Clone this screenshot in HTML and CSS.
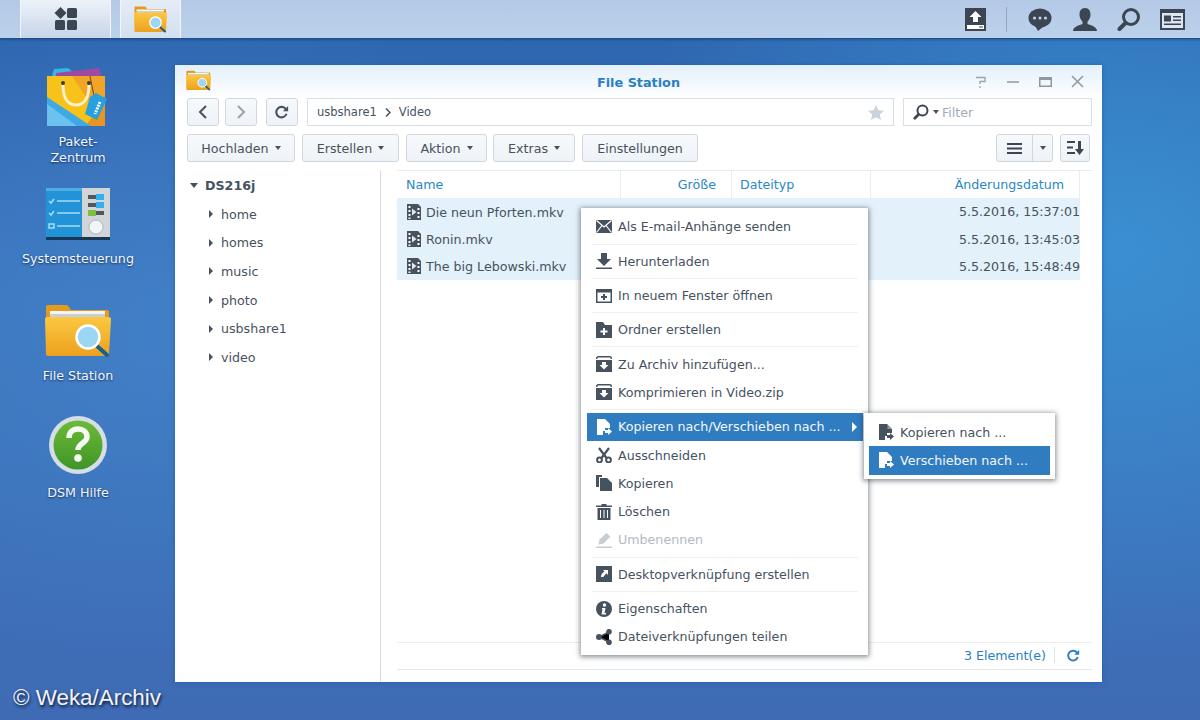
FILE: index.html
```html
<!DOCTYPE html>
<html lang="de">
<head>
<meta charset="utf-8">
<title>File Station</title>
<link rel="stylesheet" href="styles.css">
</head>
<body>
<svg class="defs" width="0" height="0" aria-hidden="true">
  <defs>
    <linearGradient id="fold" x1="0" y1="0" x2="0" y2="1"><stop offset="0" stop-color="#fbc83f"/><stop offset="1" stop-color="#eda01f"/></linearGradient>
    <linearGradient id="green" x1="0" y1="0" x2="0" y2="1"><stop offset="0" stop-color="#6cba38"/><stop offset="1" stop-color="#3f9527"/></linearGradient>
    <symbol id="film" viewBox="0 0 16 18"><path fill="#47525f" d="M1 1h11l3 3v13H1z"/><path fill="#fff" d="M2.500 3h2v2h-2zM2.500 7h2v2h-2zM2.500 11h2v2h-2zM2.500 14.500h2v1.500h-2zM11.500 5h2v2h-2zM11.500 9h2v2h-2zM11.500 13h2v2h-2z"/><path fill="#dfe7ef" d="M6 5.500l4.500 3.500-4.500 3.500z"/></symbol>
    <symbol id="move" viewBox="0 0 16 16"><path fill="currentColor" d="M1 0h8l5 5v4H9v3H7v4H1z"/><path fill="currentColor" d="M9 11h3V9l4 3.500-4 3.500v-2H9z"/><path fill="#fff" opacity=".4" d="M9.500 1v4h4z"/></symbol>
    <symbol id="archive" viewBox="0 0 16 16"><path fill="#47525f" d="M0 4h16v12H0z"/><path fill="none" stroke="#47525f" stroke-width="1.400" d="M.8 3V2a1.200 1.200 0 0 1 1.200-1.200h12A1.200 1.200 0 0 1 15.200 2v1"/><path fill="#fff" d="M6 6h4v3h2.500L8 13.500 3.500 9H6z"/></symbol>
    <symbol id="reload" viewBox="0 0 16 16"><path fill="none" stroke="currentColor" stroke-width="2.400" d="M13.200 10a6 6 0 1 1-.6-5"/><path fill="currentColor" d="M15 1v6H9z"/></symbol>
    <symbol id="folder" viewBox="0 0 66 54"><path fill="#e49b1c" d="M1 3q0-2 2-2h18q2 0 3 2l2 3h36q2 0 2 2v6H1z"/><path fill="#f4f6f8" d="M5 7h55v3H5z"/><path fill="#c9cfd5" d="M5 10h55v4H5z"/><path fill="url(#fold)" d="M0 15q0-2 2-2h61q3 0 3 2l-2 35q0 2-2 2H3q-2 0-2-2z"/><path stroke="#16608e" stroke-width="4" stroke-linecap="round" d="M52 42l10 9"/><circle cx="43" cy="33" r="11.500" fill="#9cd6f5" stroke="#fff" stroke-width="2.500"/></symbol>
  </defs>
</svg>

<header class="taskbar">
  <div class="task-left">
    <button class="task-btn start" aria-label="Hauptmenü">
      <svg width="24" height="24" viewBox="0 0 24 24"><path fill="#3c4652" d="M6.500 0l6 6-6 6-6-6z"/><rect x="13" y="1" width="10" height="10" rx="1.500" fill="#3c4652"/><rect x="1" y="13" width="10" height="10" rx="1.500" fill="#3c4652"/><rect x="13" y="13" width="10" height="10" rx="1.500" fill="#3c4652"/></svg>
    </button>
    <button class="task-btn app" aria-label="File Station"><svg width="33" height="27"><use href="#folder"/></svg></button>
  </div>
  <div class="task-right">
    <svg class="upload" width="21" height="23" viewBox="0 0 21 23"><path fill="#3c4652" d="M0 0h21v23H0z"/><path fill="#fff" d="M10.500 3l6 6h-3.500v5h-5V9H4.500z"/><path fill="#fff" d="M2 17h17v4H2z"/><path fill="#3c4652" d="M14 18.500h4v1h-4z"/></svg>
    <span class="task-sep"></span>
    <svg class="chat" width="24" height="23" viewBox="0 0 24 23"><ellipse cx="12" cy="10" rx="11.500" ry="9.500" fill="#3c4652"/><path fill="#3c4652" d="M6 16l4 7 6-5z"/><circle cx="6.500" cy="10" r="1.500" fill="#c5d6ea"/><circle cx="12" cy="10" r="1.500" fill="#c5d6ea"/><circle cx="17.500" cy="10" r="1.500" fill="#c5d6ea"/></svg>
    <svg width="24" height="23" viewBox="0 0 24 23"><path fill="#3c4652" d="M12 0c4 0 5.500 3 5.500 6.500 0 3-1.300 5.500-3 7v2.500c3 1.300 9.500 2.500 9.500 7H0c0-4.500 6.500-5.700 9.500-7v-2.500c-1.700-1.500-3-4-3-7C6.500 3 8 0 12 0z"/></svg>
    <svg width="24" height="23" viewBox="0 0 24 23"><circle cx="14" cy="9" r="7.500" fill="none" stroke="#3c4652" stroke-width="3"/><path stroke="#3c4652" stroke-width="4" stroke-linecap="round" d="M8.500 15L2.500 21"/></svg>
    <svg width="25" height="21" viewBox="0 0 25 21"><path fill="#3c4652" d="M0 0h25v21H0z"/><path fill="#dce6f2" d="M2 4h21v15H2z"/><path fill="#3c4652" d="M4 6.500h7v6H4zM13 7h8v1.500h-8zM13 10.500h8V12h-8zM4 14.500h17V16H4z"/></svg>
  </div>
</header>

<main class="desktop">
  <nav class="shortcuts">
    <a class="shortcut s-paket">
      <svg width="64" height="62" viewBox="0 0 64 62"><path fill="#37b6e8" d="M8 3l14-1 10 8H6z"/><path fill="#9d4aa0" d="M10 7l43-5 3 9H10z"/><path fill="#f7c31b" d="M1 10h58v50H1z"/><path fill="#f1a526" d="M26 10h33v50z"/><path fill="#e9951f" d="M59 30v30H40z"/><path fill="#3fa9e6" d="M1 31l44 29H1z"/><path fill="#6cc2ef" d="M1 38l30 22H1z"/><path fill="none" stroke="#fbf0d0" stroke-width="3" d="M17 19c0 13 5 20 13 20s13-7 13-20"/><circle cx="17" cy="17" r="2" fill="#3c3c3c"/><circle cx="43" cy="17" r="2" fill="#3c3c3c"/><path fill="none" stroke="#6b4a20" stroke-width="1" d="M44 10l4 20"/><path fill="#27a0df" d="M50 27l11 6-10 21-12-6 5-17z"/><path stroke="#fff" stroke-width="3" stroke-dasharray="2 1" d="M54 36l-5 12"/></svg>
      <span>Paket-<br>Zentrum</span>
    </a>
    <a class="shortcut s-sys">
      <svg width="64" height="52" viewBox="0 0 64 52"><path fill="#2293d6" d="M0 0h37v50H0z"/><path fill="#4eaee4" d="M0 0h37v3H0z"/><path fill="#d1d5d8" d="M36 0h28v50H36z"/><path fill="#1c3754" d="M0 49h64v3H0z"/><path stroke="#a8dcf7" stroke-width="1.500" d="M11 13h23M11 25h23M11 38h23"/><path fill="none" stroke="#a8dcf7" stroke-width="1.500" d="M3 13l2 2 3-4M3 25l2 2 3-4M3 36h5v4H3z"/><path fill="#50585f" d="M42 7h16v4H42zM42 15h16v4H42zM42 23h16v4H42z"/><path fill="#30b0ee" d="M50 6h8v6h-8zM50 14h8v6h-8z"/><path fill="#78c142" d="M42 22h8v6h-8z"/><circle cx="50" cy="39" r="7" fill="#f2f5f7" stroke="#aeb5ba"/></svg>
      <span>Systemsteuerung</span>
    </a>
    <a class="shortcut s-file">
      <svg width="66" height="54"><use href="#folder"/></svg>
      <span>File Station</span>
    </a>
    <a class="shortcut s-help">
      <svg width="60" height="60" viewBox="0 0 60 60"><circle cx="30" cy="30" r="29" fill="#d5dde6"/><circle cx="30" cy="30" r="24.500" fill="url(#green)"/><path fill="none" stroke="#f6fbf2" stroke-width="5.500" d="M21 23c0-6 4-9 9-9s9 3 9 8c0 6-9 6-9 13"/><circle cx="30" cy="43" r="3.800" fill="#f6fbf2"/></svg>
      <span>DSM Hilfe</span>
    </a>
  </nav>

  <section class="window">
    <div class="titlebar">
      <svg class="title-icon" width="25" height="21"><use href="#folder" /></svg>
      <h1>File Station</h1>
      <div class="win-controls">
        <svg width="12" height="12" viewBox="0 0 12 12"><path fill="none" stroke="#9aa4ad" stroke-width="1.300" d="M1 1.500h9v4H5v2.500M5 10v2"/></svg>
        <svg width="14" height="12" viewBox="0 0 14 12"><path stroke="#8e98a2" stroke-width="1.500" d="M1 6h12"/></svg>
        <svg width="13" height="12" viewBox="0 0 13 12"><path fill="#8e98a2" d="M0 1h13v10H0z"/><path fill="#f3f7fa" d="M1.500 4h10v5.500h-10z"/></svg>
        <svg width="13" height="13" viewBox="0 0 13 13"><path stroke="#8e98a2" stroke-width="1.500" d="M1 1l11 11M12 1L1 12"/></svg>
      </div>
    </div>

    <div class="nav-row">
      <button class="btn square" aria-label="Zurück"><svg width="10" height="14" viewBox="0 0 10 14"><path fill="none" stroke="#47525f" stroke-width="2" d="M8 1L2 7l6 6"/></svg></button>
      <button class="btn square" aria-label="Vor"><svg width="10" height="14" viewBox="0 0 10 14"><path fill="none" stroke="#9aa3ac" stroke-width="2" d="M2 1l6 6-6 6"/></svg></button>
      <button class="btn square reload" aria-label="Neu laden"><svg class="ico-dark" width="14" height="14"><use href="#reload"/></svg></button>
      <div class="path">
        <span>usbshare1</span>
        <svg width="6" height="9" viewBox="0 0 6 9"><path fill="none" stroke="#47525f" stroke-width="1.500" d="M1 .5l4 4-4 4"/></svg>
        <span>Video</span>
        <svg class="star" width="16" height="15" viewBox="0 0 16 15"><path fill="#ccd3da" d="M8 0l2.400 5.200 5.600.6-4.200 3.800 1.200 5.400L8 12.300 3 15l1.200-5.400L0 5.800l5.600-.6z"/></svg>
      </div>
      <div class="filter">
        <svg width="16" height="16" viewBox="0 0 16 16"><circle cx="9.500" cy="6.500" r="5" fill="none" stroke="#3c4652" stroke-width="2"/><path stroke="#3c4652" stroke-width="2.800" stroke-linecap="round" d="M5.500 10.500L1.800 14.200"/></svg>
        <i class="caret"></i>
        <span>Filter</span>
      </div>
    </div>

    <div class="tool-row">
      <button class="btn tb w-hoch">Hochladen<i class="caret"></i></button>
      <button class="btn tb w-erst">Erstellen<i class="caret"></i></button>
      <button class="btn tb w-akt">Aktion<i class="caret"></i></button>
      <button class="btn tb w-ext">Extras<i class="caret"></i></button>
      <button class="btn tb w-ein">Einstellungen</button>
      <div class="tool-right">
        <div class="btn view">
          <span class="view-main"><svg width="15" height="11" viewBox="0 0 15 11"><path stroke="#3c4652" stroke-width="2" d="M0 1h15M0 5.500h15M0 10h15"/></svg></span>
          <span class="view-drop"><i class="caret"></i></span>
        </div>
        <button class="btn sort" aria-label="Sortieren"><svg width="17" height="14" viewBox="0 0 17 14"><path stroke="#3c4652" stroke-width="2" d="M0 1h8M0 6.500h6M0 12h8"/><path fill="#3c4652" d="M11 0h3v8h3l-4.500 6L8 8h3z"/></svg></button>
      </div>
    </div>

    <div class="content">
      <aside class="tree">
        <div class="tree-root"><i class="tri-down"></i>DS216j</div>
        <div class="tree-item"><i class="tri-right"></i>home</div>
        <div class="tree-item"><i class="tri-right"></i>homes</div>
        <div class="tree-item"><i class="tri-right"></i>music</div>
        <div class="tree-item"><i class="tri-right"></i>photo</div>
        <div class="tree-item"><i class="tri-right"></i>usbshare1</div>
        <div class="tree-item"><i class="tri-right"></i>video</div>
      </aside>
      <div class="list">
        <div class="list-head">
          <span class="col-name">Name</span>
          <span class="col-size">Größe</span>
          <span class="col-type">Dateityp</span>
          <span class="col-date">Änderungsdatum</span>
        </div>
        <div class="rows">
          <div class="row"><svg width="16" height="18"><use href="#film"/></svg><span class="fname">Die neun Pforten.mkv</span><span class="fdate">5.5.2016, 15:37:01</span></div>
          <div class="row"><svg width="16" height="18"><use href="#film"/></svg><span class="fname">Ronin.mkv</span><span class="fdate">5.5.2016, 13:45:03</span></div>
          <div class="row"><svg width="16" height="18"><use href="#film"/></svg><span class="fname">The big Lebowski.mkv</span><span class="fdate">5.5.2016, 15:48:49</span></div>
        </div>
        <div class="list-foot">
          <span class="count">3 Element(e)</span>
          <span class="foot-sep"></span>
          <svg class="ico-blue" width="13" height="13"><use href="#reload"/></svg>
        </div>
      </div>
    </div>
  </section>

  <div class="menu main-menu">
    <div class="item"><svg viewBox="0 0 16 16"><path fill="#47525f" d="M0 1h16v13H0z"/><path fill="none" stroke="#fff" stroke-width="1.200" d="M.5 1.500L8 8l7.500-6.500M.5 13.500l5.500-7M15.500 13.500l-5.500-7"/></svg>Als E-mail-Anhänge senden</div>
    <div class="sep"></div>
    <div class="item"><svg viewBox="0 0 16 16"><path fill="#47525f" d="M5 0h6v6h4l-7 7-7-7h4z"/><path fill="#47525f" d="M0 14.500h16V16H0z"/></svg>Herunterladen</div>
    <div class="sep"></div>
    <div class="item"><svg viewBox="0 0 16 16"><path fill="#47525f" d="M0 1h16v14H0z"/><path fill="#fff" d="M1.500 4.500h13v9h-13z"/><path fill="#47525f" d="M7 6h2v2h2v2H9v2H7v-2H5V8h2z"/></svg>In neuem Fenster öffnen</div>
    <div class="sep"></div>
    <div class="item"><svg viewBox="0 0 16 16"><path fill="#47525f" d="M0 0h7l2 3h7v13H0z"/><path fill="#fff" d="M7 6h2v2.500h2.500v2H9V13H7v-2.500H4.500v-2H7z"/></svg>Ordner erstellen</div>
    <div class="sep"></div>
    <div class="item"><svg viewBox="0 0 16 16"><use href="#archive"/></svg>Zu Archiv hinzufügen...</div>
    <div class="item"><svg viewBox="0 0 16 16"><use href="#archive"/></svg>Komprimieren in Video.zip</div>
    <div class="sep"></div>
    <div class="item active"><svg viewBox="0 0 16 16"><use href="#move"/></svg>Kopieren nach/Verschieben nach ...<i class="tri-white"></i></div>
    <div class="item"><svg viewBox="0 0 16 16"><path fill="none" stroke="#47525f" stroke-width="2.200" d="M3 1l7.500 10M13 1L5.500 11"/><circle cx="3.500" cy="13" r="2.400" fill="none" stroke="#47525f" stroke-width="2"/><circle cx="12.500" cy="13" r="2.400" fill="none" stroke="#47525f" stroke-width="2"/></svg>Ausschneiden</div>
    <div class="item"><svg viewBox="0 0 16 16"><path fill="#47525f" d="M0 0h6v2H3v10H0z"/><path fill="#47525f" d="M4 3h7l5 5v8H4z"/></svg>Kopieren</div>
    <div class="item"><svg viewBox="0 0 16 16"><path fill="#47525f" d="M5.500 0h5v1.500H16V3H0V1.500h5.500zM1.500 4h13v12h-13z"/><path stroke="#fff" stroke-width="1" d="M4.500 6v8M8 6v8M11.500 6v8"/></svg>Löschen</div>
    <div class="item off"><svg viewBox="0 0 16 16"><path fill="#c8cdd2" d="M10.500 1l4 3.500-7 7-5 1 1-5zM0 14.500h16V16H0z"/></svg>Umbenennen</div>
    <div class="sep"></div>
    <div class="item"><svg viewBox="0 0 16 16"><path fill="#47525f" d="M0 0h16v16H0z"/><path fill="#fff" d="M7 4h5v5l-1.700-1.700-3 3.700L5 11c0-2.500 1-3.500 3.500-5.500z"/></svg>Desktopverknüpfung erstellen</div>
    <div class="sep"></div>
    <div class="item"><svg viewBox="0 0 16 16"><circle cx="8" cy="8" r="8" fill="#47525f"/><circle cx="8.500" cy="4" r="1.700" fill="#fff"/><path fill="#fff" d="M6 7h3.500l-1 5H10v1.500H5.500l1-5H6z"/></svg>Eigenschaften</div>
    <div class="item"><svg viewBox="0 0 16 16"><path stroke="#47525f" stroke-width="1.500" d="M13 3L3 8l10 5"/><circle cx="13" cy="2.800" r="2.800" fill="#47525f"/><circle cx="3" cy="8" r="3" fill="#47525f"/><circle cx="13" cy="13.200" r="2.800" fill="#47525f"/></svg>Dateiverknüpfungen teilen</div>
  </div>

  <div class="menu sub-menu">
    <div class="item"><svg class="ico-dark" viewBox="0 0 16 16"><use href="#move"/></svg>Kopieren nach ...</div>
    <div class="item active"><svg viewBox="0 0 16 16"><use href="#move"/></svg>Verschieben nach ...</div>
  </div>

  <div class="credit">© Weka/Archiv</div>
</main>
</body>
</html>
```
FILE: styles.css
```css
* { box-sizing: border-box; }
html, body { margin: 0; height: 100%; }
body {
  width: 1200px;
  height: 720px;
  overflow: hidden;
  display: flex;
  flex-direction: column;
  font-family: "DejaVu Sans", Verdana, sans-serif;
  font-size: 12.65px;
  color: #47525f;
  background:
    radial-gradient(ellipse 520px 420px at 1120px 250px, rgba(58, 146, 212, .9), rgba(58, 146, 212, 0)),
    radial-gradient(ellipse 500px 330px at 180px 340px, rgba(66, 130, 200, .8), rgba(66, 130, 200, 0)),
    linear-gradient(180deg, #2f66b0 40px, #3c74bd 300px, #3e6bb4 720px);
}
.defs { position: absolute; }
button { font: inherit; color: inherit; margin: 0; }

/* taskbar */
.taskbar {
  flex: 0 0 39px;
  display: flex;
  justify-content: space-between;
  background: linear-gradient(180deg, #b3c9e6, #bcd1ea);
  border-bottom: 1px solid #1d4f8c;
  box-shadow: 0 1px 2px rgba(20, 50, 100, .4);
}
.task-left { display: flex; gap: 9px; padding-left: 20px; }
.task-btn {
  display: flex;
  align-items: center;
  justify-content: center;
  height: 38px;
  padding: 0;
  border: 0;
  border-left: 1px solid #f2f6fb;
  border-right: 1px solid #f2f6fb;
  background: linear-gradient(180deg, #edf2f8, #c6d5e9);
}
.task-btn.start { width: 91px; }
.task-btn.app { width: 61px; background: linear-gradient(180deg, #e4ecf6, #d3e0f0); }
.task-right { display: flex; align-items: center; gap: 20px; padding-right: 15px; }
.task-right .chat { margin-right: 1px; }
.task-right .upload { margin-right: 0; }
.task-sep { width: 1px; height: 25px; background: #93a6bd; margin: 0 1px 0 0; }
.task-right svg:last-child { margin-left: -1px; }

/* desktop */
.desktop { position: relative; flex: 1; min-height: 0; }
.shortcuts { position: absolute; left: 0; top: 0; width: 156px; }
.shortcut {
  position: absolute;
  left: 0;
  width: 156px;
  display: flex;
  flex-direction: column;
  align-items: center;
  color: #f3f7fc;
  font-size: 12.7px;
  line-height: 16px;
  text-align: center;
  text-shadow: 0 1px 2px rgba(10, 40, 90, .9);
}
.shortcut span { display: block; }
.s-paket { top: 27px; }
.s-paket span { margin-top: 6px; }
.s-sys { top: 149px; }
.s-sys span { margin-top: 11px; }
.s-file { top: 265px; }
.s-file span { margin-top: 10px; }
.s-help { top: 376px; }
.s-help span { margin-top: 10px; }

/* window */
.window {
  position: absolute;
  left: 175px;
  top: 26px;
  width: 927px;
  height: 617px;
  display: flex;
  flex-direction: column;
  background: #fff;
  box-shadow: 0 0 4px rgba(25, 95, 185, .9);
}
.titlebar {
  position: relative;
  flex: 0 0 33px;
  display: flex;
  align-items: center;
  justify-content: center;
  background: linear-gradient(180deg, #e3f0fa, #fff);
}
.titlebar h1 { margin: 1px 0 0; font-size: 12.8px; font-weight: bold; color: #2a7fc4; }
.title-icon { position: absolute; left: 11px; top: 5px; }
.win-controls { position: absolute; right: 18px; top: 10px; display: flex; align-items: center; gap: 19px; }

.btn {
  display: flex;
  align-items: center;
  justify-content: center;
  height: 28px;
  padding: 0;
  border: 1px solid #cfd8e0;
  border-radius: 3px;
  background: linear-gradient(180deg, #f7f9fb, #eef3f8);
  color: #47525f;
  font-size: 12.65px;
}
.nav-row { flex: 0 0 28px; display: flex; padding: 0 10px 0 12px; }
.square { width: 32px; margin-right: 6px; }
.reload { margin-left: 3px; margin-right: 9px; }
.ico-dark { color: #47525f; }
.ico-blue { color: #2a7fc4; }
.path {
  flex: 0 0 587px;
  display: flex;
  align-items: center;
  gap: 8px;
  padding: 0 9px;
  border: 1px solid #d8dfe6;
  font-size: 11.5px;
}
.star { margin-left: auto; }
.filter {
  display: flex;
  align-items: center;
  width: 189px;
  height: 28px;
  margin-left: 9px;
  padding-left: 9px;
  border: 1px solid #d8dfe6;
  color: #a3abb3;
  font-size: 12.65px;
}
.filter span { margin-top: 1px; }
.filter .caret { margin: 0 3px 0 4px; }
.caret {
  display: inline-block;
  width: 0;
  height: 0;
  margin-left: 6px;
  border: 3.5px solid transparent;
  border-top: 4px solid #47525f;
  border-bottom: 0;
}
.tool-row { flex: 0 0 28px; display: flex; gap: 7px; margin-top: 8px; padding: 0 12px; }
.w-hoch { width: 108px; }
.w-erst { width: 97px; }
.w-akt { width: 81px; }
.w-ext { width: 82px; margin-left: -1px; }
.w-ein { width: 116px; }
.tool-right { display: flex; gap: 7px; margin-left: auto; }
.view { width: 57px; align-items: stretch; }
.view-main { flex: 1; display: flex; align-items: center; justify-content: center; border-right: 1px solid #cfd8e0; }
.view-drop { width: 19px; display: flex; align-items: center; justify-content: center; }
.view-drop .caret { margin: 0; }
.sort { width: 30px; }

.content { flex: 1; min-height: 0; display: flex; margin-top: 8px; }
.tree { flex: 0 0 206px; border-right: 1px solid #d9dde1; padding-top: 2px; }
.tree-root { display: flex; align-items: center; height: 27px; margin-bottom: 1px; padding-left: 15px; font-weight: bold; }
.tri-down {
  width: 0; height: 0; margin-right: 7px;
  border: 4px solid transparent; border-top: 5px solid #47525f; border-bottom: 0;
}
.tree-item { display: flex; align-items: center; height: 28.6px; padding-left: 34px; }
.tri-right {
  width: 0; height: 0; margin-right: 8px;
  border: 4px solid transparent; border-left: 4.5px solid #47525f; border-right: 0;
}
.list { flex: 1; display: flex; flex-direction: column; padding: 0 22px 12px 16px; min-width: 0; }
.list-head {
  flex: 0 0 28px;
  display: flex;
  align-items: center;
  margin-right: -12px;
  border-top: 1px solid #e8ecef;
  color: #2a87c8;
}
.list-head span { height: 100%; display: flex; align-items: center; border-right: 1px solid #eaedf0; }
.col-name { width: 224px; padding-left: 9px; }
.col-size { width: 111px; justify-content: flex-end; padding-right: 15px; }
.col-type { width: 139px; padding-left: 8px; }
.col-date { width: 209px; justify-content: flex-end; padding-right: 15px; }
.rows { flex: 1; }
.row {
  display: flex;
  align-items: center;
  height: 27.4px;
  padding-left: 9px;
  background: #e3f1fa;
}
.row svg { flex: none; margin-right: 4px; }
.fname { margin-top: 1px; }
.fdate { margin-left: auto; white-space: nowrap; }
.list-foot {
  flex: 0 0 28px;
  display: flex;
  align-items: center;
  justify-content: flex-end;
  margin-right: -12px;
  padding: 0 12px 2px 0;
  border-top: 1px solid #eceef0;
  border-bottom: 1px solid #e4e7ea;
  color: #2a80bf;
}
.foot-sep { width: 1px; height: 16px; margin: 0 12px 0 8px; background: #e0e4e8; }

/* menus */
.menu {
  position: absolute;
  background: #fff;
  padding: 4.8px 5px 5px 6px;
  box-shadow: 0 1px 5px 1px rgba(40, 50, 60, .55);
}
.main-menu { left: 581px; top: 169px; width: 287px; height: 447px; }
.sub-menu { left: 864px; top: 374px; width: 191px; height: 66px; padding: 5px; }
.item { display: flex; align-items: center; height: 28.3px; padding-left: 9px; white-space: nowrap; position: relative; }
.item svg { flex: none; width: 16px; height: 16px; margin-right: 6px; }
.item.active { background: #2f7cc1; color: #f3f8fc; }
.item.active svg { color: #fff; }
.item.off { color: #b3bac0; }
.sep { height: 6px; margin: 0 5px; display: flex; align-items: center; }
.sep::before { content: ""; flex: 1; height: 1px; background: #eef0f2; }
.tri-white {
  position: absolute; right: 6px; top: 9px;
  border: 5px solid transparent; border-left: 5px solid #fff; border-right: 0;
}

.credit {
  position: absolute;
  left: 13px;
  bottom: 10px;
  font-family: "Liberation Sans", Arial, sans-serif;
  font-size: 22.4px;
  line-height: 24px;
  color: #f2f4f8;
  text-shadow: 1px 2px 3px rgba(10, 20, 50, .95);
}
```
